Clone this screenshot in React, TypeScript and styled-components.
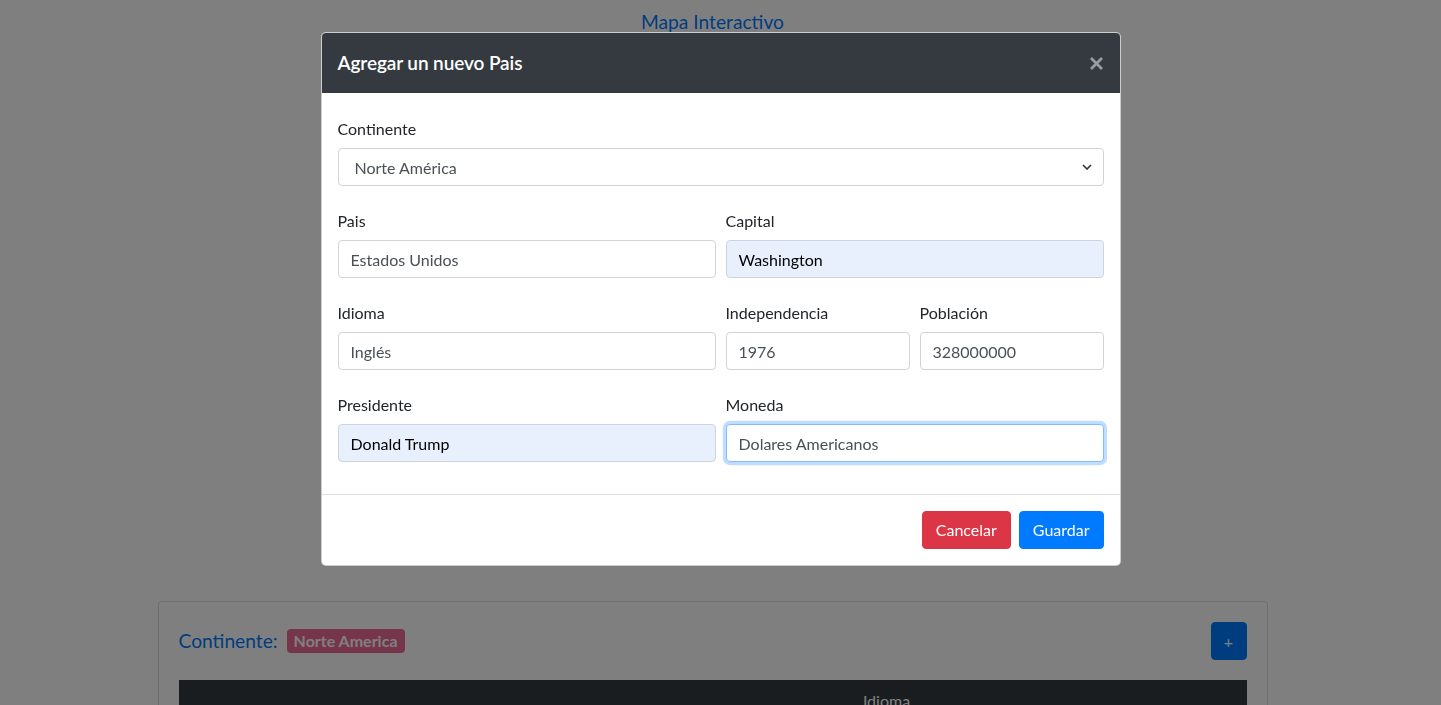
import React from "react";
import styled, { createGlobalStyle } from "styled-components";

const GlobalStyle = createGlobalStyle`
  html, body {
    margin: 0;
    padding: 0;
    height: 100%;
    overflow: hidden;
  }
  body {
    font-family: Lato, "Open Sans", sans-serif;
    font-size: 16px;
    line-height: 1.5;
    color: #212529;
    background: #fff;
  }
  * {
    box-sizing: border-box;
  }
`;

const fields = [
  [
    { label: "Pais", value: "Estados Unidos", span: 6 },
    { label: "Capital", value: "Washington", span: 6, autofill: true },
  ],
  [
    { label: "Idioma", value: "Inglés", span: 6 },
    { label: "Independencia", value: "1976", span: 3 },
    { label: "Población", value: "328000000", span: 3 },
  ],
  [
    { label: "Presidente", value: "Donald Trump", span: 6, autofill: true },
    { label: "Moneda", value: "Dolares Americanos", span: 6, focused: true },
  ],
];

const App = () => {
  return (
    <>
      <GlobalStyle />
      <Page>
        <Container>
          <MapTitle>Mapa Interactivo</MapTitle>
          <MapArea />
          <Card>
            <CardBody>
              <CardTop>
                <Heading>
                  Continente: <Badge>Norte America</Badge>
                </Heading>
                <AddButton>+</AddButton>
              </CardTop>
              <TableHead>
                <Th />
                <Th>Idioma</Th>
                <Th />
              </TableHead>
            </CardBody>
          </Card>
        </Container>
      </Page>

      <Backdrop>
        <Modal>
          <ModalHeader>
            <ModalTitle>Agregar un nuevo Pais</ModalTitle>
            <CloseButton aria-label="Cerrar">
              <svg width="13" height="13" viewBox="0 0 13 13">
                <path
                  d="M2 2l9 9M11 2l-9 9"
                  stroke="currentColor"
                  strokeWidth="2.8"
                  strokeLinecap="square"
                />
              </svg>
            </CloseButton>
          </ModalHeader>
          <ModalBody>
            <FormRow>
              <Field span={12}>
                <Label>Continente</Label>
                <SelectWrap>
                  <Select defaultValue="na">
                    <option value="na">Norte América</option>
                  </Select>
                  <Chevron width="10" height="6" viewBox="0 0 10 6">
                    <path d="M1 1l4 4 4-4" fill="none" stroke="#333" strokeWidth="1.6" />
                  </Chevron>
                </SelectWrap>
              </Field>
            </FormRow>
            {fields.map((row, i) => (
              <FormRow key={i}>
                {row.map((f) => (
                  <Field key={f.label} span={f.span}>
                    <Label>{f.label}</Label>
                    <Input
                      readOnly
                      value={f.value}
                      $autofill={!!f.autofill}
                      $focused={!!f.focused}
                    />
                  </Field>
                ))}
              </FormRow>
            ))}
          </ModalBody>
          <ModalFooter>
            <Button $variant="danger">Cancelar</Button>
            <Button $variant="primary">Guardar</Button>
          </ModalFooter>
        </Modal>
      </Backdrop>
    </>
  );
};

export default App;

const Page = styled.div`
  width: 100%;
  height: 100vh;
  padding-right: 16px;
  background: #fff;
`;

const Container = styled.div`
  max-width: 1140px;
  margin: 0 auto;
  padding: 0 15px;
`;

const MapTitle = styled.div`
  padding-top: 10px;
  text-align: center;
  font-size: 19.2px;
  line-height: 24px;
  color: #007bff;
`;

const MapArea = styled.div`
  height: 547px;
  margin-bottom: 20px;
`;

const Card = styled.div`
  border: 1px solid rgba(0, 0, 0, 0.125);
  border-radius: 4px;
  background: #fff;
`;

const CardBody = styled.div`
  padding: 20px 20px 0;
`;

const CardTop = styled.div`
  display: flex;
  align-items: center;
  justify-content: space-between;
  height: 38px;
  margin-bottom: 20px;
`;

const Heading = styled.div`
  display: flex;
  align-items: center;
  gap: 9px;
  font-size: 19.2px;
  color: #007bff;
`;

const Badge = styled.span`
  display: inline-block;
  padding: 0 7px;
  line-height: 24px;
  font-size: 16px;
  font-weight: 700;
  color: #fff;
  background: #ec6a95;
  border-radius: 4px;
`;

const AddButton = styled.button`
  width: 36px;
  height: 38px;
  border: 1px solid #007bff;
  border-radius: 4px;
  background: #007bff;
  color: #fff;
  font-family: inherit;
  font-size: 16px;
  padding: 0;
`;

const TableHead = styled.div`
  display: grid;
  grid-template-columns: 530px 356px 1fr;
  background: #343a40;
  color: #fff;
`;

const Th = styled.div`
  padding: 9px 12px;
  text-align: center;
  line-height: 24px;
`;

const Backdrop = styled.div`
  position: fixed;
  inset: 0;
  background: rgba(0, 0, 0, 0.5);
  display: flex;
  justify-content: center;
  align-items: flex-start;
`;

const Modal = styled.div`
  width: 800px;
  margin-top: 32px;
  background: #fff;
  border: 1px solid rgba(0, 0, 0, 0.2);
  border-radius: 5px;
  overflow: hidden;
`;

const ModalHeader = styled.div`
  display: flex;
  align-items: center;
  justify-content: space-between;
  padding: 16px;
  height: 60px;
  background: #343a40;
  color: #fff;
`;

const ModalTitle = styled.h5`
  margin: 0;
  font-size: 19px;
  font-weight: 600;
  line-height: 28px;
  letter-spacing: -0.1px;
`;

const CloseButton = styled.span`
  display: flex;
  color: rgba(255, 255, 255, 0.5);
  margin-right: 1px;
`;

const ModalBody = styled.div`
  padding: 16px 16px 1px;

  & > div:last-child {
    margin-bottom: 31px;
  }
`;

const FormRow = styled.div`
  display: grid;
  grid-template-columns: repeat(12, 1fr);
  column-gap: 10px;
  margin-bottom: 15px;
`;

const Field = styled.div<{ span: number }>`
  grid-column: span ${(p) => p.span};
  min-width: 0;
`;

const Label = styled.label`
  display: block;
  padding-top: 8px;
  margin-bottom: 7px;
  line-height: 24px;
  color: #212529;
`;

const Input = styled.input<{ $autofill: boolean; $focused: boolean }>`
  display: block;
  width: 100%;
  height: 38px;
  padding: 6px 12px;
  font-family: inherit;
  font-size: 16px;
  line-height: 24px;
  border: 1px solid ${(p) => (p.$focused ? "#80bdff" : "#ced4da")};
  border-radius: 4px;
  outline: none;
  color: ${(p) => (p.$autofill ? "#000" : "#495057")};
  background: ${(p) => (p.$autofill ? "#e8f0fe" : "#fff")};
  box-shadow: ${(p) =>
    p.$focused ? "0 0 0 3.2px rgba(0, 123, 255, 0.25)" : "none"};
`;

const SelectWrap = styled.div`
  position: relative;
`;

const Select = styled.select`
  display: block;
  width: 100%;
  height: 38px;
  padding: 6px 12px 6px 16px;
  font-family: inherit;
  font-size: 16px;
  color: #495057;
  background: #fff;
  border: 1px solid #ced4da;
  border-radius: 4px;
  appearance: none;
  outline: none;
`;

const Chevron = styled.svg`
  position: absolute;
  right: 12px;
  top: 16px;
  pointer-events: none;
`;

const ModalFooter = styled.div`
  display: flex;
  justify-content: flex-end;
  gap: 8px;
  padding: 16px;
  border-top: 1px solid #dee2e6;
`;

const Button = styled.button<{ $variant: "danger" | "primary" }>`
  height: 38px;
  padding: 6px 13px;
  font-family: inherit;
  font-size: 16px;
  line-height: 24px;
  color: #fff;
  border-radius: 4px;
  border: 1px solid
    ${(p) => (p.$variant === "danger" ? "#dc3545" : "#007bff")};
  background: ${(p) => (p.$variant === "danger" ? "#dc3545" : "#007bff")};
`;
